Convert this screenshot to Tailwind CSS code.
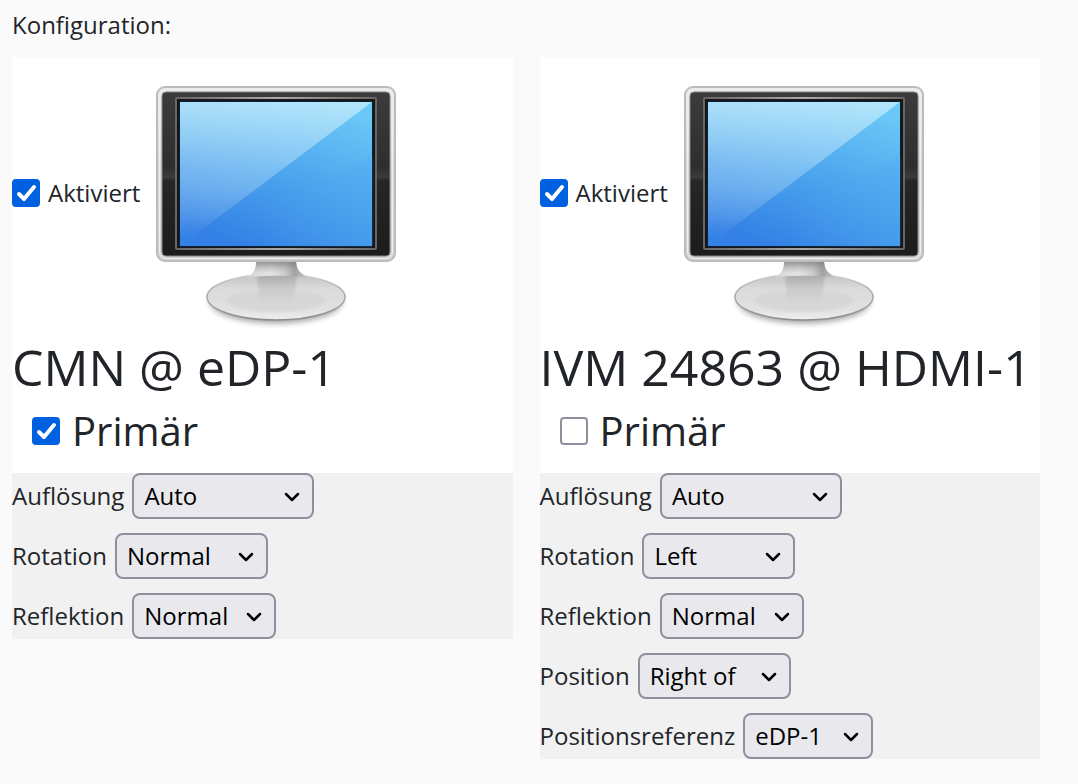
<!DOCTYPE html>
<html lang="de">
<head>
  <meta charset="UTF-8">
  <meta name="viewport" content="width=device-width, initial-scale=1.0">
  <title>Konfiguration</title>
  <script src="https://cdn.jsdelivr.net/npm/@tailwindcss/browser@4"></script>
</head>
<body class="min-h-screen bg-[#fafafa] pt-1 pb-6 pl-3 pr-[38px] font-['Open_Sans','Noto_Sans',sans-serif] text-[24px] leading-[42px] text-[#212529]">

  <!-- shared drawings -->
  <svg class="absolute size-0" aria-hidden="true">
    <defs>
      <linearGradient id="frame" x1="0" y1="0" x2="0" y2="1">
        <stop offset="0" stop-color="#ececec"/><stop offset=".5" stop-color="#dadada"/><stop offset="1" stop-color="#d2d2d2"/>
      </linearGradient>
      <linearGradient id="bezel" x1="0" y1="0" x2="0" y2="1">
        <stop offset="0" stop-color="#3c3c3c"/><stop offset=".45" stop-color="#2e2e2e"/><stop offset=".52" stop-color="#3a3a3a"/><stop offset=".54" stop-color="#262626"/><stop offset="1" stop-color="#1c1c1c"/>
      </linearGradient>
      <linearGradient id="rim" x1="0" y1="0" x2="1" y2="0">
        <stop offset="0" stop-color="#666"/><stop offset=".5" stop-color="#aaa"/><stop offset="1" stop-color="#666"/>
      </linearGradient>
      <linearGradient id="screen" x1=".8" y1="0" x2=".3" y2="1">
        <stop offset="0" stop-color="#6cc9f7"/><stop offset=".5" stop-color="#4ca5ed"/><stop offset="1" stop-color="#3380e6"/>
      </linearGradient>
      <linearGradient id="lower" x1="0" y1="0" x2="1" y2="0">
        <stop offset=".4" stop-color="#4ea8f0" stop-opacity="0"/><stop offset="1" stop-color="#4ea8f0" stop-opacity=".7"/>
      </linearGradient>
      <linearGradient id="glare" x1="0" y1="0" x2="0" y2="1">
        <stop offset="0" stop-color="#c8effc" stop-opacity=".75"/><stop offset=".45" stop-color="#c0e4fb" stop-opacity=".42"/><stop offset=".95" stop-color="#fff" stop-opacity="0"/>
      </linearGradient>
      <linearGradient id="neck" x1="0" y1="0" x2="1" y2="0">
        <stop offset="0" stop-color="#d4d4d4"/><stop offset=".4" stop-color="#e4e4e4"/><stop offset=".6" stop-color="#cecece"/><stop offset=".74" stop-color="#a2a2a2"/><stop offset="1" stop-color="#d8d8d8"/>
      </linearGradient>
      <linearGradient id="neckshade" x1="0" y1="0" x2="0" y2="1">
        <stop offset="0" stop-color="#777" stop-opacity=".8"/><stop offset=".7" stop-color="#999" stop-opacity="0"/>
      </linearGradient>
      <linearGradient id="foot" x1="0" y1="0" x2="0" y2="1">
        <stop offset="0" stop-color="#c2c2c2"/><stop offset=".3" stop-color="#dadada"/><stop offset=".8" stop-color="#e2e2e2"/><stop offset="1" stop-color="#efefef"/>
      </linearGradient>
      <linearGradient id="footedge" x1="0" y1="0" x2="0" y2="1">
        <stop offset="0" stop-color="#ccc"/><stop offset=".5" stop-color="#aaa"/><stop offset="1" stop-color="#8c8c8c"/>
      </linearGradient>
      <linearGradient id="mirror" x1="0" y1="0" x2="0" y2="1">
        <stop offset="0" stop-color="#999" stop-opacity=".6"/><stop offset="1" stop-color="#c4c4c4" stop-opacity="0"/>
      </linearGradient>
      <filter id="soft" x="-20%" y="-50%" width="140%" height="200%"><feGaussianBlur stdDeviation="3"/></filter>
      <filter id="faint" x="-20%" y="-20%" width="140%" height="140%"><feGaussianBlur stdDeviation="1"/></filter>
    </defs>
    <symbol id="monitor" viewBox="0 0 256 272">
      <ellipse cx="128" cy="244" rx="66" ry="22" fill="#000" opacity=".4" filter="url(#soft)"/>
      <ellipse cx="128" cy="240" rx="69" ry="23" fill="url(#foot)" stroke="url(#footedge)" stroke-width="1.5"/>
      <path d="M76 243q4-8 52-10q48 2 52 10q-12 12-52 12t-52-12z" fill="#d2d2d2" opacity=".6" filter="url(#faint)"/>
      <path d="M109 218h40l-4 30h-34z" fill="url(#mirror)" filter="url(#faint)"/>
      <path d="M108 204h40c1 9 3 13 16 17-16-3-54-3-68 0 10-4 12-8 12-17z" fill="url(#neck)"/>
      <path d="M108 204h40c1 9 3 13 16 17-16-3-54-3-68 0 10-4 12-8 12-17z" fill="url(#neckshade)"/>
      <rect x="9" y="30" width="238" height="174" rx="8" fill="url(#frame)" stroke="#bcbcbc" stroke-width="2"/>
      <rect x="11.5" y="32.5" width="233" height="169" rx="6" fill="none" stroke="#eee"/>
      <rect x="14" y="35" width="228" height="164" rx="4" fill="url(#bezel)" stroke="#808080"/>
      <rect x="28" y="41" width="200" height="151" rx="1" fill="#171717" stroke="url(#rim)" stroke-width="2"/>
      <rect x="31" y="44" width="194" height="146" fill="#0b2038"/>
      <rect x="32" y="45" width="192" height="144" fill="url(#screen)"/>
      <path d="M224 100v89H32z" fill="url(#lower)" opacity=".5" filter="url(#faint)"/>
      <path d="M32 45h192L32 189z" fill="url(#glare)"/>
    </symbol>
    <symbol id="tick" viewBox="0 0 28 28">
      <path d="M7 15l5 5L22 8" fill="none" stroke="#fff" stroke-width="4" stroke-linecap="round" stroke-linejoin="round"/>
    </symbol>
    <symbol id="chevron" viewBox="0 0 16 10">
      <path d="M2 2l6 6 6-6" fill="none" stroke="#000" stroke-width="2.5" stroke-linecap="round" stroke-linejoin="round"/>
    </symbol>
  </svg>

  <p class="mb-[11px]">Konfiguration:</p>

  <main class="grid grid-cols-2 items-start gap-[27px]">
    <section>
      <div class="bg-white pb-4">
        <div class="flex items-center">
          <span class="relative mr-2 flex">
            <input id="enabled-edp" type="checkbox" checked class="peer size-7 appearance-none rounded border-2 border-[#8f8f9d] bg-white checked:border-[#0061e0] checked:bg-[#0061e0]">
            <svg class="pointer-events-none absolute inset-0 hidden size-7 peer-checked:block"><use href="#tick"/></svg>
          </span>
          <label for="enabled-edp" class="mr-2">Aktiviert</label>
          <svg class="h-[272px] w-64 shrink-0" role="img" aria-label="Monitor"><use href="#monitor"/></svg>
        </div>
        <h2 class="whitespace-nowrap text-[50px] leading-[76px]">CMN @ eDP-1</h2>
        <div class="flex items-center pl-5">
          <span class="relative mr-3 flex">
            <input id="primary-edp" type="checkbox" checked class="peer size-7 appearance-none rounded border-2 border-[#8f8f9d] bg-white checked:border-[#0061e0] checked:bg-[#0061e0]">
            <svg class="pointer-events-none absolute inset-0 hidden size-7 peer-checked:block"><use href="#tick"/></svg>
          </span>
          <label for="primary-edp" class="text-[40px] leading-[52px]">Primär</label>
        </div>
      </div>
      <div class="flex flex-col gap-[14px] bg-[#f1f1f1]">
        <div class="flex items-center gap-2">
          <label for="resolution-edp">Auflösung</label>
          <span class="relative">
            <select id="resolution-edp" class="block h-[46px] w-[182px] appearance-none rounded-lg border-2 border-[#8f8f9d] bg-[#e9e9ed] pl-[10px] text-black"><option>Auto</option></select>
            <svg class="pointer-events-none absolute right-[14px] top-[19px] h-[10px] w-4"><use href="#chevron"/></svg>
          </span>
        </div>
        <div class="flex items-center gap-2">
          <label for="rotation-edp">Rotation</label>
          <span class="relative">
            <select id="rotation-edp" class="block h-[46px] w-[153px] appearance-none rounded-lg border-2 border-[#8f8f9d] bg-[#e9e9ed] pl-[10px] text-black"><option>Normal</option><option>Left</option><option>Right</option><option>Inverted</option></select>
            <svg class="pointer-events-none absolute right-[14px] top-[19px] h-[10px] w-4"><use href="#chevron"/></svg>
          </span>
        </div>
        <div class="flex items-center gap-2">
          <label for="reflection-edp">Reflektion</label>
          <span class="relative">
            <select id="reflection-edp" class="block h-[46px] w-36 appearance-none rounded-lg border-2 border-[#8f8f9d] bg-[#e9e9ed] pl-[10px] text-black"><option>Normal</option><option>X</option><option>Y</option><option>XY</option></select>
            <svg class="pointer-events-none absolute right-[14px] top-[19px] h-[10px] w-4"><use href="#chevron"/></svg>
          </span>
        </div>
      </div>
    </section>

    <section>
      <div class="bg-white pb-4">
        <div class="flex items-center">
          <span class="relative mr-2 flex">
            <input id="enabled-hdmi" type="checkbox" checked class="peer size-7 appearance-none rounded border-2 border-[#8f8f9d] bg-white checked:border-[#0061e0] checked:bg-[#0061e0]">
            <svg class="pointer-events-none absolute inset-0 hidden size-7 peer-checked:block"><use href="#tick"/></svg>
          </span>
          <label for="enabled-hdmi" class="mr-2">Aktiviert</label>
          <svg class="h-[272px] w-64 shrink-0" role="img" aria-label="Monitor"><use href="#monitor"/></svg>
        </div>
        <h2 class="whitespace-nowrap text-[50px] leading-[76px]">IVM 24863 @ HDMI-1</h2>
        <div class="flex items-center pl-5">
          <span class="relative mr-3 flex">
            <input id="primary-hdmi" type="checkbox" class="peer size-7 appearance-none rounded border-2 border-[#8f8f9d] bg-white checked:border-[#0061e0] checked:bg-[#0061e0]">
            <svg class="pointer-events-none absolute inset-0 hidden size-7 peer-checked:block"><use href="#tick"/></svg>
          </span>
          <label for="primary-hdmi" class="text-[40px] leading-[52px]">Primär</label>
        </div>
      </div>
      <div class="flex flex-col gap-[14px] bg-[#f1f1f1]">
        <div class="flex items-center gap-2">
          <label for="resolution-hdmi">Auflösung</label>
          <span class="relative">
            <select id="resolution-hdmi" class="block h-[46px] w-[182px] appearance-none rounded-lg border-2 border-[#8f8f9d] bg-[#e9e9ed] pl-[10px] text-black"><option>Auto</option></select>
            <svg class="pointer-events-none absolute right-[14px] top-[19px] h-[10px] w-4"><use href="#chevron"/></svg>
          </span>
        </div>
        <div class="flex items-center gap-2">
          <label for="rotation-hdmi">Rotation</label>
          <span class="relative">
            <select id="rotation-hdmi" class="block h-[46px] w-[153px] appearance-none rounded-lg border-2 border-[#8f8f9d] bg-[#e9e9ed] pl-[10px] text-black"><option>Normal</option><option selected>Left</option><option>Right</option><option>Inverted</option></select>
            <svg class="pointer-events-none absolute right-[14px] top-[19px] h-[10px] w-4"><use href="#chevron"/></svg>
          </span>
        </div>
        <div class="flex items-center gap-2">
          <label for="reflection-hdmi">Reflektion</label>
          <span class="relative">
            <select id="reflection-hdmi" class="block h-[46px] w-36 appearance-none rounded-lg border-2 border-[#8f8f9d] bg-[#e9e9ed] pl-[10px] text-black"><option>Normal</option><option>X</option><option>Y</option><option>XY</option></select>
            <svg class="pointer-events-none absolute right-[14px] top-[19px] h-[10px] w-4"><use href="#chevron"/></svg>
          </span>
        </div>
        <div class="flex items-center gap-2">
          <label for="position-hdmi">Position</label>
          <span class="relative">
            <select id="position-hdmi" class="block h-[46px] w-[153px] appearance-none rounded-lg border-2 border-[#8f8f9d] bg-[#e9e9ed] pl-[10px] text-black"><option>Right of</option><option>Left of</option><option>Above</option><option>Below</option></select>
            <svg class="pointer-events-none absolute right-[14px] top-[19px] h-[10px] w-4"><use href="#chevron"/></svg>
          </span>
        </div>
        <div class="flex items-center gap-2">
          <label for="reference-hdmi">Positionsreferenz</label>
          <span class="relative">
            <select id="reference-hdmi" class="block h-[46px] w-[130px] appearance-none rounded-lg border-2 border-[#8f8f9d] bg-[#e9e9ed] pl-[10px] text-black"><option>eDP-1</option></select>
            <svg class="pointer-events-none absolute right-[14px] top-[19px] h-[10px] w-4"><use href="#chevron"/></svg>
          </span>
        </div>
      </div>
    </section>
  </main>

</body>
</html>
